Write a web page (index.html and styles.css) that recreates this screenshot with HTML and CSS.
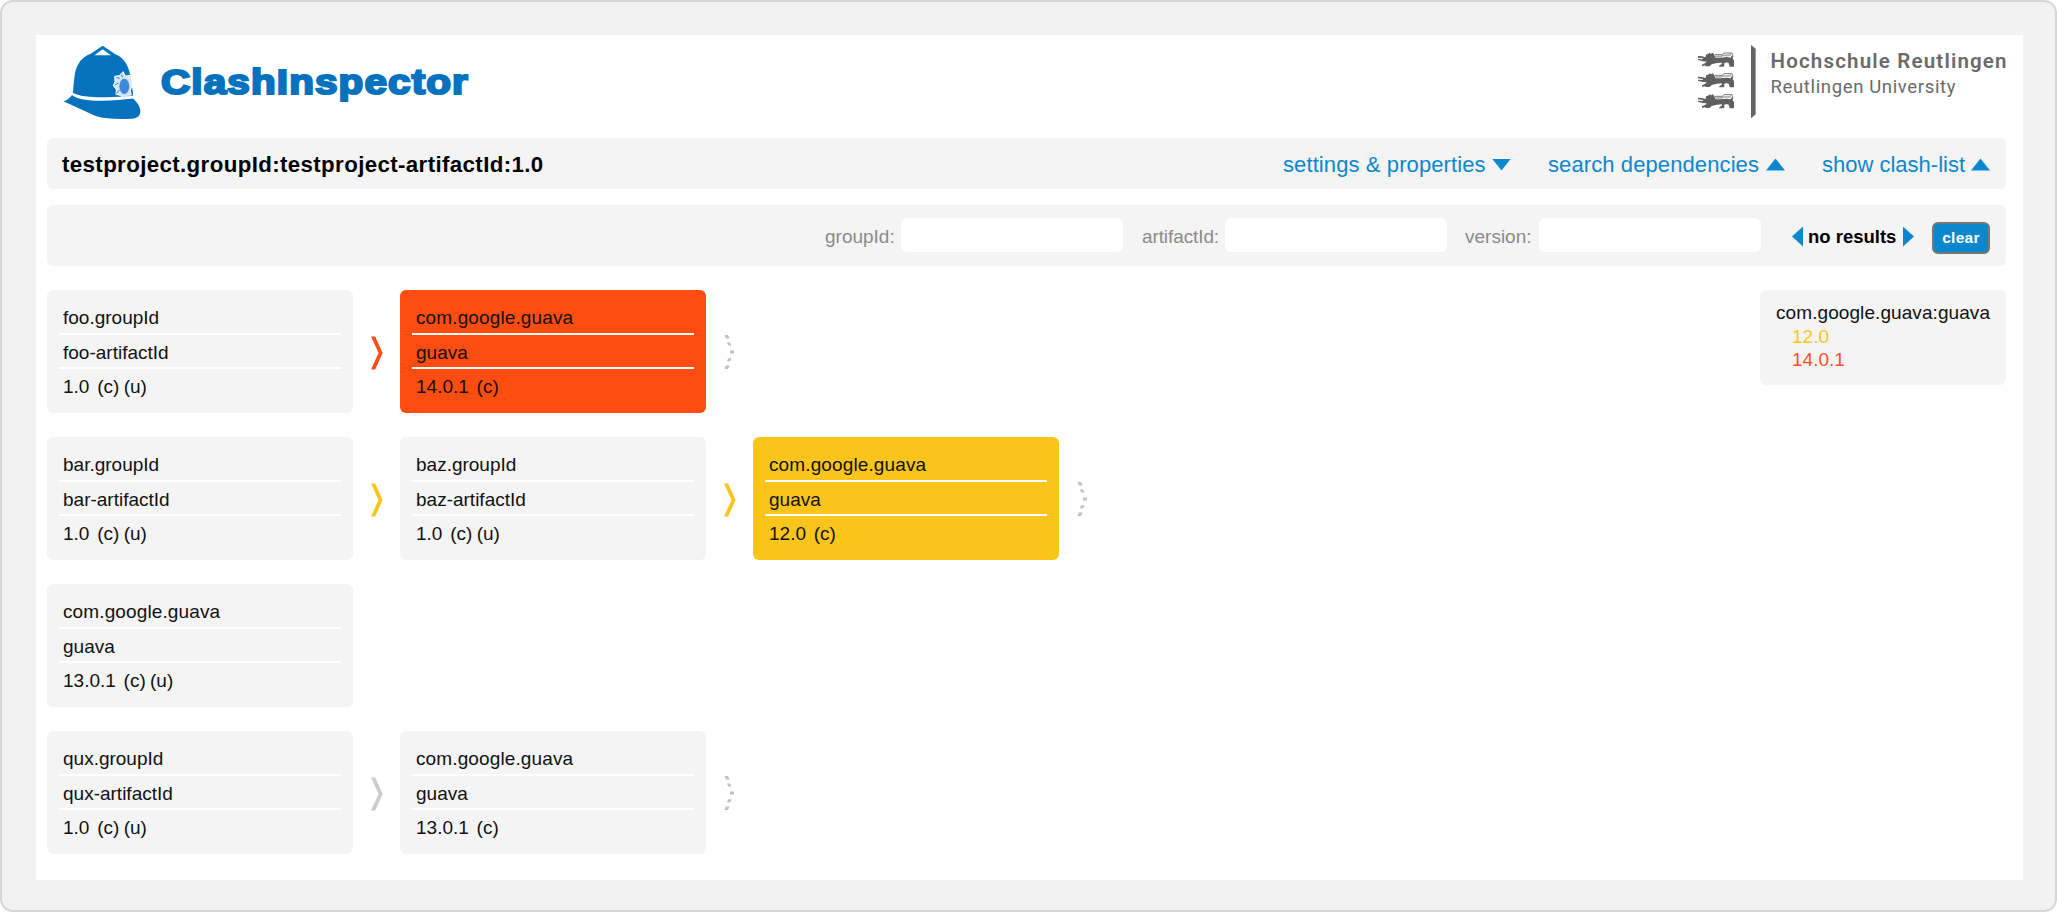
FILE: index.html
```html
<!DOCTYPE html>
<html lang="en">
<head>
<meta charset="utf-8">
<title>ClashInspector</title>
<link rel="stylesheet" href="styles.css">
</head>
<body>
<svg class="defs" width="0" height="0" aria-hidden="true">
  <symbol id="arrow" viewBox="0 0 14 34"><path d="M1 .5H5.200L12.600 17 5.200 33.500H1L8.600 17z" fill="currentColor"/></symbol>
  <symbol id="dots" viewBox="0 0 14 36"><g fill="#c0c0c0"><path d="M1.500 1h3.500l1.500 3.500H3z"/><path d="M4 8.600h3l1.500 3H5.300z"/><path d="M7 16.500h4v3H7z"/><path d="M5.300 24.200h3.400l-1.500 3H3.800z"/><path d="M2.800 31.500h3.700L5 35H1.500z"/></g></symbol>
  <symbol id="lion" viewBox="0 0 108 48"><path fill="#5f5f5f" d="M0 12l12 1 10 3 3-9 6-1 3-4 5 3 6-3 4 6 4 9h14l20-2 10 2 6-7 3 2-2 8 5 6 1 8 3 3v7H95l-3-11-7-2-8 4 3 4-3 5H63l2-5 6-2 1-5-15 1-16 4-6 6H22v-3l-10 3v-5l10-5 4-4-12-1-14-4v-3l13 1 3-3-16-2z"/><path fill="none" stroke="#a8a8a8" stroke-width="5" d="M52 13h18l5-3h18l6-3"/><path fill="none" stroke="#777" stroke-width="3" d="M51 8h22l5-5h24l2 5-3 8"/></symbol>
</svg>
<div class="frame">
  <main class="panel">
    <header class="header">
      <div class="brand">
        <svg class="helmet" viewBox="0 0 330 285" role="img" aria-label="Police helmet">
          <path fill="#0672be" d="M158 32l37 25c26 10 40 34 45 60l9 58q1 10-7 13c-60 7-132 5-173-7 0-17 3-50 6-66 6-28 20-49 46-58z"/>
          <path fill="#fff" d="M158 43l25 18h-50z"/>
          <path fill="#0672be" d="M66 180c10 9 30 16 74 17 40 1 76-2 108-7 12 10 22 23 23 37 1 14-9 23-25 24-36 2-78 2-109-8L40 199q16-4 26-19z"/>
          <path fill="none" stroke="#fff" stroke-width="7" d="M66 176c18 10 39 13 77 14 40 1 70 0 108-4"/>
          <path fill="#d3e6f7" stroke="#fff" stroke-width="3" d="M219 110l7 13 14-2 1 16 5 14-5 16 3 13-14 1-8 10-11-10-13-3 1-14-9-12 5-13-1-15 14-2z"/>
          <path fill="none" stroke="#2a7fcc" stroke-width="3" d="M209 130l-9-3M205 144l-10 6M208 166l-9 9M215 119l2 8"/>
          <ellipse cx="223" cy="154" rx="15" ry="23" fill="#4089d8"/>
        </svg>
        <svg class="wordmark" viewBox="0 0 320 50"><text x="0" y="33.500" textLength="308" lengthAdjust="spacingAndGlyphs">ClashInspector</text></svg>
      </div>
      <div class="university">
        <svg class="crest" viewBox="0 0 240 240" aria-hidden="true">
          <use href="#lion" x="24" y="36" width="108" height="48"/>
          <use href="#lion" x="24" y="98" width="108" height="48"/>
          <use href="#lion" x="24" y="161" width="108" height="48"/>
          <path fill="#666" d="M183 15l14 11v197l-14 12z"/>
        </svg>
        <svg class="uniname" viewBox="0 0 240 80"><text class="uni-de" x="0.500" y="27.500" textLength="236">Hochschule Reutlingen</text><text class="uni-en" x="0.500" y="53" textLength="185">Reutlingen University</text></svg>
      </div>
    </header>

    <section class="bar titlebar">
      <h1 class="project">testproject.groupId:testproject-artifactId:1.0</h1>
      <nav class="links">
        <a class="link"><span class="t-settings">settings &amp; properties</span><i class="tri down"></i></a>
        <a class="link"><span class="t-search">search dependencies</span><i class="tri up"></i></a>
        <a class="link"><span class="t-list">show clash-list</span><i class="tri up"></i></a>
      </nav>
    </section>

    <section class="bar searchbar">
      <label class="field first"><span class="label l-group">groupId:</span><input class="input" type="text"></label>
      <label class="field"><span class="label l-artifact">artifactId:</span><input class="input" type="text"></label>
      <label class="field"><span class="label l-version">version:</span><input class="input" type="text"></label>
      <div class="results"><i class="tri left"></i><b class="count">no results</b><i class="tri right"></i></div>
      <button class="clear">clear</button>
    </section>

    <section class="content">
      <div class="tree">
        <div class="row">
          <div class="card"><p class="line">foo.groupId</p><p class="line">foo-artifactId</p><p class="line ver">1.0 <span class="flag">(c)</span> <span class="used">(u)</span></p></div>
          <svg class="arrow red"><use href="#arrow"/></svg>
          <div class="card clash"><p class="line wide">com.google.guava</p><p class="line">guava</p><p class="line ver">14.0.1 <span class="flag">(c)</span></p></div>
          <svg class="dots"><use href="#dots"/></svg>
        </div>
        <div class="row">
          <div class="card"><p class="line">bar.groupId</p><p class="line">bar-artifactId</p><p class="line ver">1.0 <span class="flag">(c)</span> <span class="used">(u)</span></p></div>
          <svg class="arrow yellow"><use href="#arrow"/></svg>
          <div class="card"><p class="line">baz.groupId</p><p class="line">baz-artifactId</p><p class="line ver">1.0 <span class="flag">(c)</span> <span class="used">(u)</span></p></div>
          <svg class="arrow yellow"><use href="#arrow"/></svg>
          <div class="card warn"><p class="line wide">com.google.guava</p><p class="line">guava</p><p class="line ver">12.0 <span class="flag">(c)</span></p></div>
          <svg class="dots"><use href="#dots"/></svg>
        </div>
        <div class="row">
          <div class="card"><p class="line wide">com.google.guava</p><p class="line">guava</p><p class="line ver">13.0.1 <span class="flag">(c)</span> <span class="used">(u)</span></p></div>
        </div>
        <div class="row">
          <div class="card"><p class="line">qux.groupId</p><p class="line">qux-artifactId</p><p class="line ver">1.0 <span class="flag">(c)</span> <span class="used">(u)</span></p></div>
          <svg class="arrow gray"><use href="#arrow"/></svg>
          <div class="card"><p class="line wide">com.google.guava</p><p class="line">guava</p><p class="line ver">13.0.1 <span class="flag">(c)</span></p></div>
          <svg class="dots"><use href="#dots"/></svg>
        </div>
      </div>
      <aside class="clashlist">
        <div class="artifact">com.google.guava:guava</div>
        <div class="v v-yellow">12.0</div>
        <div class="v v-red">14.0.1</div>
      </aside>
    </section>
  </main>
</div>
</body>
</html>
```
FILE: styles.css
```css
* { box-sizing: border-box; }
body {
  margin: 0;
  background: #fff;
  color: #111;
  font-family: "Liberation Sans", Arial, sans-serif;
  font-size: 19px;
}
.defs { position: absolute; }
.frame {
  width: 2057px;
  height: 912px;
  padding: 33px 32px 30px 34px;
  border: 2px solid #d6d6d6;
  border-radius: 13px;
  background: #f2f2f2;
}
.panel {
  height: 845px;
  width: 1987px;
  padding: 0 17px 0 11px;
  background: #fff;
}
.header {
  display: flex;
  justify-content: space-between;
  height: 103px;
}
.brand, .university { display: flex; }
.helmet { width: 110px; height: 95px; margin-left: 3px; }
.wordmark { width: 320px; height: 50px; margin: 25px 0 0 1px; }
.wordmark text {
  font: bold 35px "Liberation Sans", Arial, sans-serif;
  letter-spacing: 1px;
  fill: #0672be;
  stroke: #0672be;
  stroke-width: 2.200px;
}
.crest { width: 80px; height: 80px; margin-top: 5px; }
.uniname { width: 240px; height: 80px; margin: 5px -4px 0 0; }
.uniname text { font-family: Roboto, sans-serif; fill: #6a6a6a; }
.uni-de { font-size: 20.500px; font-weight: 600; }
.uni-en { font-size: 18.500px; font-weight: 400; }

.bar {
  display: flex;
  align-items: center;
  border-radius: 6px;
  background: #f4f4f4;
}
.titlebar {
  height: 51px;
  padding: 2px 16px 0 15px;
  justify-content: space-between;
}
.project {
  margin: 0;
  font-size: 22.300px;
  letter-spacing: 0.37px;
  color: #000;
}
.links { display: flex; gap: 37px; }
.link {
  display: flex;
  align-items: center;
  gap: 6px;
  color: #0c87cc;
  font-size: 22px;
  letter-spacing: 0.1px;
}
.t-settings { width: 203px; white-space: nowrap; }
.t-search { width: 212px; white-space: nowrap; }
.t-list { width: 143px; letter-spacing: 0; white-space: nowrap; }
.tri { display: block; flex: none; background: #0a87cd; }
.up, .down { width: 19px; height: 12px; }
.up { clip-path: polygon(50% 0, 100% 100%, 0 100%); }
.down { clip-path: polygon(0 0, 100% 0, 50% 100%); }
.left, .right { width: 11px; height: 20px; }
.left { clip-path: polygon(0 50%, 100% 0, 100% 100%); }
.right { clip-path: polygon(0 0, 100% 50%, 0 100%); }

.searchbar {
  height: 61px;
  margin-top: 16px;
  padding-right: 16px;
  justify-content: flex-end;
}
.field { display: flex; align-items: center; margin-right: 18px; }
.first { margin-right: 19px; }
.label { padding-top: 2px; color: #8a8a8a; white-space: nowrap; }
.l-group { width: 76px; }
.l-artifact { width: 83px; letter-spacing: -0.1px; }
.l-version { width: 74px; }
.input {
  width: 222px;
  height: 34px;
  margin: 0 0 2px;
  border: 0;
  border-radius: 6px;
  background: #fff;
}
.results {
  display: flex;
  align-items: center;
  gap: 5px;
  margin: 2px 18px 0 13px;
}
.count {
  width: 90px;
  color: #000;
  font-size: 18.500px;
  white-space: nowrap;
}
.clear {
  width: 58px;
  height: 32px;
  margin-top: 4px;
  padding: 0;
  border: 2px solid #777;
  border-radius: 6px;
  background: #0a87cd;
  color: #fff;
  font: bold 15.500px "Liberation Sans", Arial, sans-serif;
  letter-spacing: 0.3px;
}

.content {
  display: flex;
  justify-content: space-between;
  align-items: flex-start;
  margin-top: 24px;
}
.tree { display: grid; gap: 24px; }
.row { display: flex; align-items: center; height: 123px; }
.card {
  width: 306px;
  height: 123px;
  padding: 10px 12px;
  border-radius: 6px;
  background: #f4f4f4;
}
.line {
  height: 34.500px;
  margin: 0;
  padding: 0 4px;
  border-bottom: 2px solid #fff;
  line-height: 35px;
  white-space: nowrap;
}
.wide { letter-spacing: 0.12px; }
.ver { border-bottom: 0; }
.flag { margin-left: 2.500px; }
.used { margin-left: -1px; }
.clash { background: #ff4d12; }
.warn { background: #fac51b; }
.arrow { width: 14px; height: 34px; margin: 2px 16px 0 17px; }
.dots { width: 14px; height: 36px; margin-left: 17px; margin-top: 1px; }
.red { color: #ff4d12; }
.yellow { color: #fac51b; }
.gray { color: #ccc; }
.clashlist {
  width: 246px;
  height: 95px;
  padding: 11px 16px;
  border-radius: 6px;
  background: #f4f4f4;
  line-height: 23.500px;
  white-space: nowrap;
}
.artifact { letter-spacing: 0.08px; }
.v { padding-left: 16px; }
.v-yellow { color: #fac51b; }
.v-red { color: #ff4d2a; }
```
